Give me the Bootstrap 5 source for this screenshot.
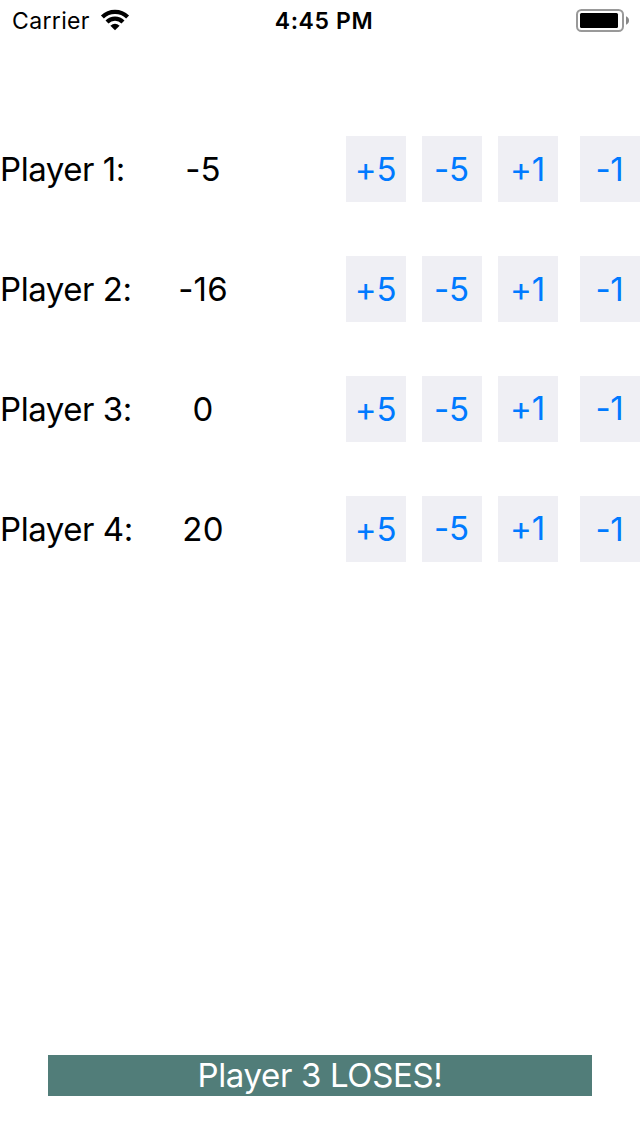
<!DOCTYPE html>
<html lang="en">
<head>
<meta charset="utf-8">
<meta name="viewport" content="width=device-width, initial-scale=1">
<title>Life Counter</title>
<link href="https://cdn.jsdelivr.net/npm/bootstrap@5.3.0/dist/css/bootstrap.min.css" rel="stylesheet">
<style>
  body { font-family: Inter, "Liberation Sans", sans-serif; font-size: 33px; line-height: 41px; letter-spacing: -.45px; color: #000; background: #fff; }
  .status { height: 42px; font-size: 23px; line-height: 42px; }
  .carrier { padding-left: 12px; letter-spacing: .35px; }
  .wifi { margin-left: 10px; margin-bottom: 2px; }
  .clock { font-weight: 600; letter-spacing: .6px; padding-left: 6px; }
  .battery { padding-right: 10px; }
  .battery svg { margin-bottom: 2px; }
  .players { padding-top: 94px; gap: 54px; }
  .player { height: 66px; }
  .player-name { width: 160px; }
  .score { width: 86px; letter-spacing: .2px; }
  .step { width: 60px; height: 66px; background: #efeff4; color: #007aff; padding: 0 1px 0 0; border: 0; border-radius: 0; font-size: inherit; letter-spacing: -.2px; line-height: 66px; }
  .step:hover { background: #e3e3ea; color: #007aff; }
  .step + .step { margin-left: 16px; }
  .step + .step:last-child { margin-left: 22px; }
  .raised { padding-bottom: 2px; line-height: 64px; }
  .result { margin: 0 48px 40px; height: 41px; background: #517d79; color: #fff; letter-spacing: -.35px; }
</style>
</head>
<body>
<div class="vh-100 d-flex flex-column overflow-hidden">
  <header class="status row g-0 flex-shrink-0">
    <div class="col carrier d-flex align-items-center">
      <span>Carrier</span>
      <svg class="wifi" width="30" height="22" viewBox="0 0 30 22" role="img" aria-label="Wi-Fi">
        <g fill="none" stroke="#000" stroke-width="4.2">
          <path d="M2.4 7.9A18.2 18.2 0 0 1 27.6 7.9"/>
          <path d="M7 13A11.3 11.3 0 0 1 23 13"/>
        </g>
        <path d="M10.4 16.7Q15 13 19.6 16.7L15 21.2Z"/>
      </svg>
    </div>
    <div class="col clock text-center text-nowrap">4:45 PM</div>
    <div class="col battery d-flex align-items-center justify-content-end">
      <svg width="54" height="24" viewBox="0 0 54 24" role="img" aria-label="Battery">
        <rect x="1" y="2" width="46" height="21" rx="4.5" fill="none" stroke="#999" stroke-width="2"/>
        <rect x="4" y="5" width="38" height="15" rx="1.5"/>
        <path d="M50 8.3Q53 9.5 53 12.5T50 16.7Z" fill="#888"/>
      </svg>
    </div>
  </header>
  <main class="players d-flex flex-column">
    <div class="player d-flex align-items-center">
      <span class="player-name">Player 1:</span><span class="score text-center">-5</span>
      <div class="d-flex ms-auto"><button class="btn step">+5</button><button class="btn step">-5</button><button class="btn step">+1</button><button class="btn step">-1</button></div>
    </div>
    <div class="player d-flex align-items-center">
      <span class="player-name">Player 2:</span><span class="score text-center">-16</span>
      <div class="d-flex ms-auto"><button class="btn step">+5</button><button class="btn step">-5</button><button class="btn step">+1</button><button class="btn step">-1</button></div>
    </div>
    <div class="player d-flex align-items-center">
      <span class="player-name">Player 3:</span><span class="score text-center">0</span>
      <div class="d-flex ms-auto"><button class="btn step">+5</button><button class="btn step">-5</button><button class="btn step raised">+1</button><button class="btn step raised">-1</button></div>
    </div>
    <div class="player d-flex align-items-center">
      <span class="player-name">Player 4:</span><span class="score text-center">20</span>
      <div class="d-flex ms-auto"><button class="btn step">+5</button><button class="btn step raised">-5</button><button class="btn step raised">+1</button><button class="btn step">-1</button></div>
    </div>
  </main>
  <footer class="result mt-auto text-center">Player 3 LOSES!</footer>
</div>
<script src="https://cdn.jsdelivr.net/npm/bootstrap@5.3.0/dist/js/bootstrap.bundle.min.js"></script>
</body>
</html>
